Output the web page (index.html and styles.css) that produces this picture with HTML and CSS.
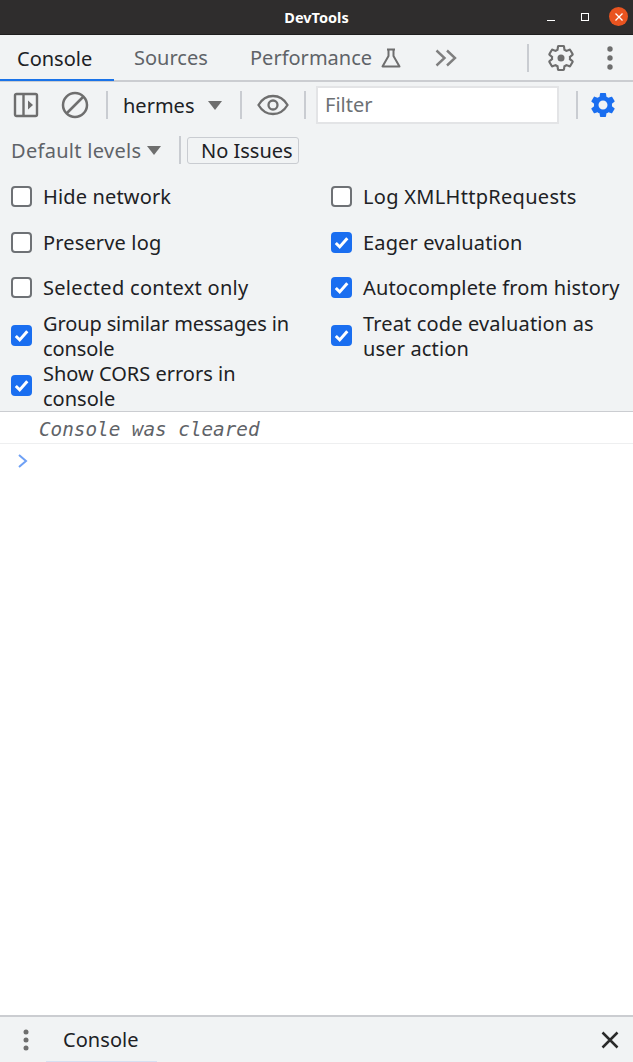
FILE: index.html
```html
<!DOCTYPE html>
<html lang="en">
<head>
<meta charset="utf-8">
<title>DevTools</title>
<link rel="stylesheet" href="styles.css">
</head>
<body>
<div class="app">
  <header class="titlebar">
    <span class="title">DevTools</span>
    <div class="winctl">
      <svg class="win-ic win-min" width="10" height="10" viewBox="0 0 10 10"><path d="M1 8.500h8" stroke="#fff" stroke-width="1"/></svg>
      <svg class="win-ic" width="10" height="10" viewBox="0 0 10 10"><rect x="1.500" y="1.500" width="7" height="7" fill="none" stroke="#fff" stroke-width="1"/></svg>
      <span class="win-close"><svg width="10" height="10" viewBox="0 0 10 10"><path d="M1.500 1.500l7 7M8.500 1.500l-7 7" stroke="#fff" stroke-width="1.300"/></svg></span>
    </div>
  </header>

  <nav class="tabs">
    <span class="tab tab-active">Console</span>
    <span class="tab">Sources</span>
    <span class="tab tab-perf">Performance
      <svg width="24" height="24" viewBox="0 0 24 24" fill="none" stroke="#6e6e6e" stroke-width="2"><path d="M8 3.500h8M9.500 3.500v6.500L3.500 20.500h17L14.500 10V3.500" stroke-linejoin="round"/></svg>
    </span>
    <svg class="more" width="22" height="18" viewBox="0 0 22 18" fill="none" stroke="#7f7f7f" stroke-width="2.400"><path d="M1.500 1.500L9.500 9l-8 7.500M12 1.500L20 9l-8 7.500"/></svg>
    <span class="sep sep-tabs"></span>
    <svg class="gear" width="30" height="30" viewBox="0 0 24 24" fill="none" stroke="#6e6e6e" stroke-width="1.700"><path d="M19.140 12.940c.04-.3.06-.61.06-.94 0-.32-.02-.64-.07-.94l2.030-1.580c.18-.14.23-.41.12-.61l-1.920-3.320c-.12-.22-.37-.29-.59-.22l-2.390.96c-.5-.38-1.030-.7-1.620-.94l-.36-2.540c-.04-.24-.24-.41-.48-.41h-3.840c-.24 0-.43.17-.47.41l-.36 2.540c-.59.24-1.130.57-1.620.94l-2.390-.96c-.22-.08-.47 0-.59.22L2.740 8.870c-.12.21-.08.47.12.61l2.030 1.580c-.05.3-.09.63-.09.94s.02.64.07.94l-2.030 1.580c-.18.14-.23.41-.12.61l1.920 3.320c.12.22.37.29.59.22l2.390-.96c.5.38 1.030.7 1.620.94l.36 2.540c.05.24.24.41.48.41h3.840c.24 0 .44-.17.47-.41l.36-2.540c.59-.24 1.130-.56 1.620-.94l2.390.96c.22.08.47 0 .59-.22l1.920-3.320c.12-.22.07-.47-.12-.61l-2.010-1.580z"/><circle cx="12" cy="12" r="2.800" fill="#6e6e6e" stroke="none"/></svg>
    <svg class="kebab" width="6" height="24" viewBox="0 0 6 24" fill="#6e6e6e"><circle cx="3" cy="3" r="2.700"/><circle cx="3" cy="12" r="2.700"/><circle cx="3" cy="21" r="2.700"/></svg>
  </nav>

  <section class="toolbar">
    <div class="row row-one">
      <svg class="ic-sidebar" width="26" height="26" viewBox="0 0 26 26" fill="none"><rect x="2" y="2" width="22" height="22" rx="1.500" stroke="#6e6e6e" stroke-width="2.400"/><path d="M10.500 2v22" stroke="#6e6e6e" stroke-width="2.400"/><path d="M15 8.500l5 4.500-5 4.500z" fill="#6e6e6e"/></svg>
      <svg class="ic-clear" width="28" height="28" viewBox="0 0 28 28" fill="none" stroke="#6e6e6e" stroke-width="2.500"><circle cx="14" cy="14" r="12"/><path d="M5.500 22.500L22.500 5.500"/></svg>
      <span class="sep sep-a"></span>
      <span class="context">hermes</span>
      <span class="caret caret-ctx"></span>
      <span class="sep sep-b"></span>
      <svg class="ic-eye" width="32" height="22" viewBox="0 0 32 22" fill="none" stroke="#6e6e6e" stroke-width="2.300"><path d="M1.500 11C5 5 10 2 16 2s11 3 14.500 9C27 17 22 20 16 20S5 17 1.500 11z"/><circle cx="16" cy="11" r="4.500"/></svg>
      <span class="sep sep-c"></span>
      <span class="filter">Filter</span>
      <span class="sep sep-d"></span>
      <svg class="gear-on" width="30" height="30" viewBox="0 0 24 24" fill="#1a6ef0"><path d="M19.140 12.940c.04-.3.06-.61.06-.94 0-.32-.02-.64-.07-.94l2.030-1.580c.18-.14.23-.41.12-.61l-1.920-3.320c-.12-.22-.37-.29-.59-.22l-2.390.96c-.5-.38-1.030-.7-1.620-.94l-.36-2.540c-.04-.24-.24-.41-.48-.41h-3.840c-.24 0-.43.17-.47.41l-.36 2.540c-.59.24-1.130.57-1.620.94l-2.390-.96c-.22-.08-.47 0-.59.22L2.740 8.870c-.12.21-.08.47.12.61l2.030 1.580c-.05.3-.09.63-.09.94s.02.64.07.94l-2.030 1.580c-.18.14-.23.41-.12.61l1.920 3.320c.12.22.37.29.59.22l2.390-.96c.5.38 1.030.7 1.620.94l.36 2.540c.05.24.24.41.48.41h3.840c.24 0 .44-.17.47-.41l.36-2.540c.59-.24 1.130-.56 1.620-.94l2.390.96c.22.08.47 0 .59-.22l1.920-3.320c.12-.22.07-.47-.12-.61l-2.010-1.580zM12 15.600c-1.980 0-3.600-1.620-3.600-3.600s1.620-3.600 3.600-3.600 3.600 1.620 3.600 3.600-1.620 3.600-3.600 3.600z"/></svg>
    </div>
    <div class="row row-two">
      <span class="levels">Default levels</span>
      <span class="caret caret-levels"></span>
      <span class="sep sep-e"></span>
      <span class="issues">No Issues</span>
    </div>
  </section>

  <section class="settings">
    <label class="opt"><span class="box"></span><span class="opt-text track-s">Hide network</span></label>
    <label class="opt"><span class="box"></span><span class="opt-text track-m">Log XMLHttpRequests</span></label>
    <label class="opt"><span class="box"></span><span class="opt-text track-s">Preserve log</span></label>
    <label class="opt"><span class="box box-on"><svg viewBox="0 0 21 21" width="21" height="21"><path d="M4.800 11l3.900 3.900 7.600-8.600" fill="none" stroke="#fff" stroke-width="3"/></svg></span><span class="opt-text track-s">Eager evaluation</span></label>
    <label class="opt"><span class="box"></span><span class="opt-text track-m">Selected context only</span></label>
    <label class="opt"><span class="box box-on"><svg viewBox="0 0 21 21" width="21" height="21"><path d="M4.800 11l3.900 3.900 7.600-8.600" fill="none" stroke="#fff" stroke-width="3"/></svg></span><span class="opt-text track-s">Autocomplete from history</span></label>
    <label class="opt"><span class="box box-on"><svg viewBox="0 0 21 21" width="21" height="21"><path d="M4.800 11l3.900 3.900 7.600-8.600" fill="none" stroke="#fff" stroke-width="3"/></svg></span><span class="opt-text track-n">Group similar messages in console</span></label>
    <label class="opt"><span class="box box-on"><svg viewBox="0 0 21 21" width="21" height="21"><path d="M4.800 11l3.900 3.900 7.600-8.600" fill="none" stroke="#fff" stroke-width="3"/></svg></span><span class="opt-text track-s">Treat code evaluation as user action</span></label>
    <label class="opt"><span class="box box-on"><svg viewBox="0 0 21 21" width="21" height="21"><path d="M4.800 11l3.900 3.900 7.600-8.600" fill="none" stroke="#fff" stroke-width="3"/></svg></span><span class="opt-text">Show CORS errors in console</span></label>
  </section>

  <main class="console">
    <div class="msg">Console was cleared</div>
    <div class="prompt"><svg width="12" height="16" viewBox="0 0 12 16" fill="none" stroke="#6ea0f5" stroke-width="2"><path d="M2 2l7 6-7 6"/></svg></div>
  </main>

  <footer class="drawer">
    <svg class="kebab-small" width="6" height="22" viewBox="0 0 6 22" fill="#6e6e6e"><circle cx="3" cy="3" r="2.500"/><circle cx="3" cy="11" r="2.500"/><circle cx="3" cy="19" r="2.500"/></svg>
    <span class="drawer-tab">Console</span>
    <svg class="drawer-close" width="18" height="18" viewBox="0 0 18 18" fill="none" stroke="#2a2a2a" stroke-width="2.500"><path d="M1.500 1.500l15 15M16.500 1.500l-15 15"/></svg>
  </footer>
</div>
</body>
</html>
```
FILE: styles.css
```css
* { box-sizing: border-box; }
html, body { margin: 0; height: 100%; }
body { font-family: "Noto Sans", "Open Sans", sans-serif; color: #202124; background: #fff; }
.app { display: flex; flex-direction: column; height: 1062px; width: 633px; overflow: hidden; }

.titlebar { height: 35px; flex: none; background: #2f2d2d; border-bottom: 1px solid #1f1e1e; display: flex; align-items: center; justify-content: center; position: relative; }
.title { color: #fff; font-size: 14.500px; font-weight: 700; }
.winctl { position: absolute; right: 5px; top: 7px; display: flex; align-items: center; gap: 19.500px; height: 19px; }
.win-min { margin-right: 4.500px; }
.win-close { width: 19px; height: 19px; border-radius: 50%; background: #e95420; display: flex; align-items: center; justify-content: center; }

.tabs { height: 47px; flex: none; background: #f1f3f4; border-bottom: 2px solid #cbcdd1; display: flex; align-items: center; position: relative; }
.tab { font-size: 20px; line-height: 49px; color: #5f6368; white-space: nowrap; }
.tab-active { color: #202124; width: 114px; padding-left: 17px; height: 47px; border-bottom: 2px solid #1a73e8; }
.tab:nth-child(2) { margin-left: 20px; width: 116px; }
.tab-perf { display: flex; align-items: center; gap: 7px; }
.more { margin-left: 32px; flex: none; }
.sep { display: block; width: 2px; background: #c9ccd1; flex: none; }
.sep-tabs { height: 28px; margin-left: 70px; }
.gear { margin-left: 17px; flex: none; }
.kebab { margin-left: 31px; flex: none; }

.toolbar { flex: none; background: #f1f3f4; height: 90px; }
.row { display: flex; align-items: center; }
.row-one { height: 46px; padding-left: 13px; }
.row-two { height: 44px; padding-left: 11px; }
.ic-clear { margin-left: 22px; flex: none; }
.sep-a { height: 28px; margin-left: 17px; }
.context { font-size: 20px; margin-left: 15px; width: 71px; }
.caret { width: 0; height: 0; border-left: 7px solid transparent; border-right: 7px solid transparent; border-top: 9px solid #6e6e6e; flex: none; }
.caret-ctx { margin-left: 14px; }
.sep-b { height: 28px; margin-left: 18px; }
.ic-eye { margin-left: 15px; flex: none; }
.sep-c { height: 28px; margin-left: 15px; }
.filter { width: 243px; height: 38px; margin-left: 10px; border: 2px solid #e3e4e6; background: #fff; font-size: 20px; color: #6d7175; padding-left: 7px; line-height: 33px; flex: none; }
.sep-d { height: 28px; margin-left: 17px; }
.gear-on { margin-left: 10px; flex: none; }
.levels { font-size: 20px; color: #5f6368; width: 131px; white-space: nowrap; letter-spacing: .3px; }
.caret-levels { margin-left: 5px; }
.sep-e { height: 28px; margin-left: 18px; }
.issues { margin-left: 6px; width: 112px; height: 27px; border: 1px solid #c9ccd1; border-radius: 3px; font-size: 20px; line-height: 25px; padding-left: 13px; white-space: nowrap; }

.settings { flex: none; height: 240px; background: #f1f3f4; border-bottom: 1px solid #cbcdd1; display: grid; grid-template-columns: 320px 313px; grid-template-rows: 45.500px 45.500px 45.500px 50px 50px; padding-top: 2px; }
.opt { display: flex; align-items: center; padding-left: 11px; }
.box { width: 21px; height: 21px; border: 2px solid #6e7175; border-radius: 4px; background: #fff; flex: none; margin-right: 11px; overflow: hidden; }
.box-on { background: #1a6ef0; border: none; }
.box-on svg { display: block; }
.opt-text { font-size: 20px; line-height: 25px; padding-right: 10px; }
.track-s { letter-spacing: .15px; }
.track-m { letter-spacing: .3px; }
.track-n { letter-spacing: -.12px; }

.console { flex: 1; background: #fff; }
.msg { height: 32px; border-bottom: 1px solid #eeeff0; padding-left: 39px; font-family: "DejaVu Sans Mono", monospace; font-style: italic; font-size: 19.300px; line-height: 36px; color: #5f6368; white-space: nowrap; }
.prompt { height: 34px; padding-left: 17px; display: flex; align-items: center; }

.drawer { flex: none; height: 47px; background: #f1f3f4; border-top: 2px solid #cbcdd1; display: flex; align-items: center; position: relative; padding-left: 23px; }
.kebab-small { flex: none; }
.drawer-tab { font-size: 20px; letter-spacing: .05px; margin-left: 17px; padding-left: 17px; align-self: flex-end; height: 45px; line-height: 46px; width: 111px; margin-right: auto; border-bottom: 1px solid #d6e0f2; }
.drawer-close { margin-right: 14px; flex: none; }
```
